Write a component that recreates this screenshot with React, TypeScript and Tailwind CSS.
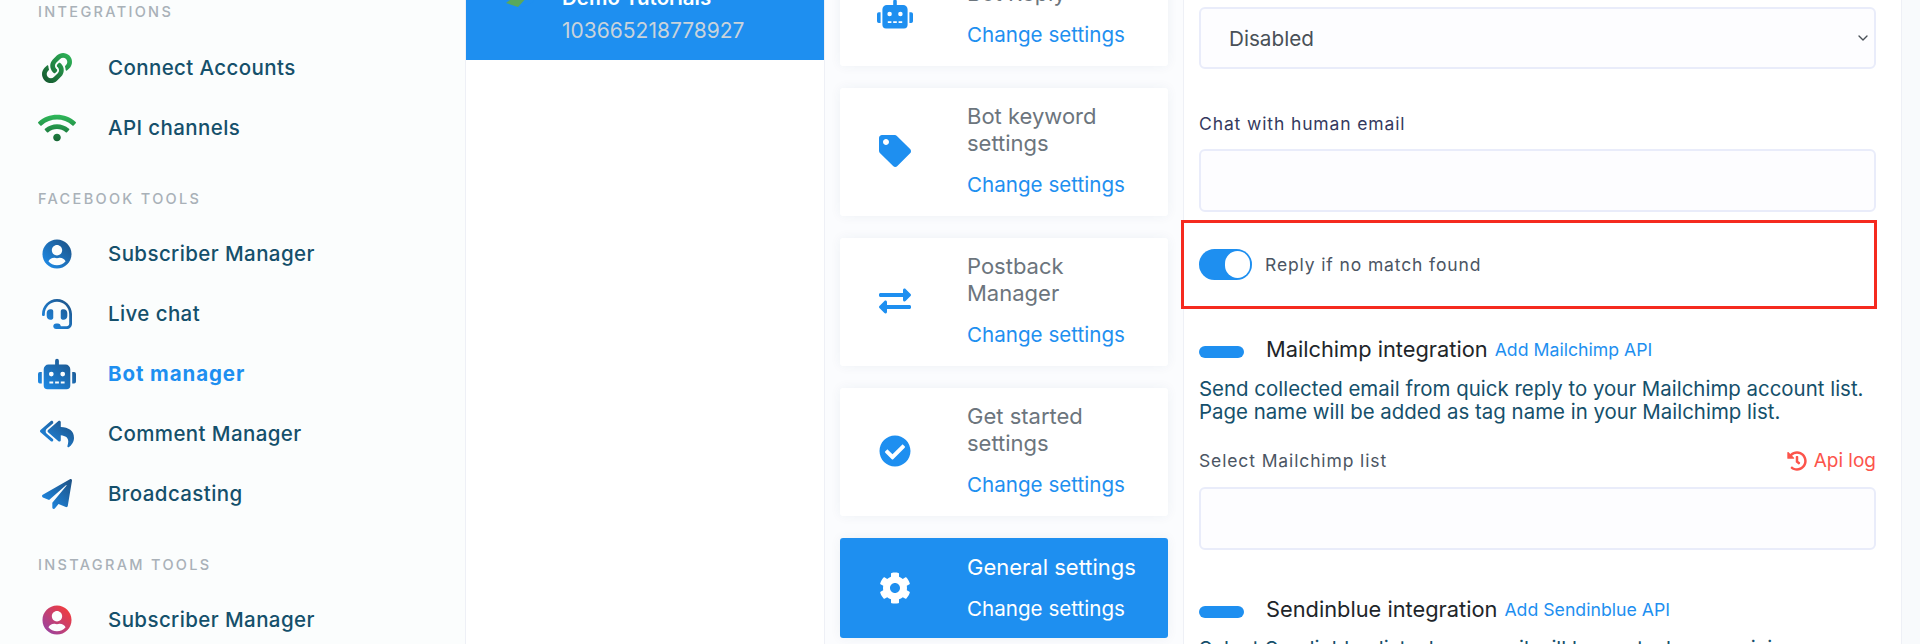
import type { ReactNode } from "react";
import { ChevronDown } from "lucide-react";
import {
  FaCheckCircle,
  FaCog,
  FaExchangeAlt,
  FaHeadset,
  FaHistory,
  FaLink,
  FaPaperPlane,
  FaReplyAll,
  FaRobot,
  FaTag,
  FaUserCircle,
  FaWifi,
} from "react-icons/fa";

function Gradients() {
  return (
    <svg className="block h-0 w-0">
      <defs>
        <linearGradient id="blue-grad" x1="0" y1="1" x2="1" y2="0">
          <stop offset="0%" stopColor="#1e90f0" />
          <stop offset="100%" stopColor="#1d4f80" />
        </linearGradient>
        <linearGradient id="green-grad" x1="0" y1="1" x2="1" y2="0">
          <stop offset="0%" stopColor="#14532d" />
          <stop offset="100%" stopColor="#2fb95a" />
        </linearGradient>
        <linearGradient id="wifi-grad" x1="0" y1="0" x2="0" y2="1">
          <stop offset="0%" stopColor="#2fb95a" />
          <stop offset="100%" stopColor="#166534" />
        </linearGradient>
        <linearGradient id="insta-grad" x1="0" y1="1" x2="1" y2="0">
          <stop offset="0%" stopColor="#8e44ad" />
          <stop offset="100%" stopColor="#ff3b2f" />
        </linearGradient>
      </defs>
    </svg>
  );
}

function SectionLabel({ children, className }: { children: ReactNode; className: string }) {
  return (
    <div className={`h-5 text-[14.5px] leading-5 font-medium tracking-[0.16em] text-[#a9b1b8] ${className}`}>
      {children}
    </div>
  );
}

function NavRow({ icon, label, active }: { icon: ReactNode; label: string; active?: boolean }) {
  return (
    <div className="flex h-[60px] items-center">
      <div className="flex w-[70px] shrink-0 justify-start">
        <div className="flex w-[38px] justify-center">{icon}</div>
      </div>
      <span
        className={`mt-[1px] text-[20.5px] ${active ? "font-bold tracking-[0.9px] text-[#1e8ff0]" : "font-medium tracking-[0.4px] text-[#15506b]"}`}
      >
        {label}
      </span>
    </div>
  );
}

function Sidebar() {
  return (
    <aside className="w-[466px] shrink-0 border-r border-[#eef0f6] bg-[#fbfdfd] pt-[2px] pl-[38px]">
      <Gradients />
      <SectionLabel className="mb-4">INTEGRATIONS</SectionLabel>
      <NavRow icon={<FaLink size={30} fill="url(#green-grad)" />} label="Connect Accounts" />
      <NavRow icon={<FaWifi size={38} fill="url(#wifi-grad)" />} label="API channels" />
      <SectionLabel className="mt-[31px] mb-[15px]">FACEBOOK TOOLS</SectionLabel>
      <NavRow icon={<FaUserCircle size={30} fill="url(#blue-grad)" />} label="Subscriber Manager" />
      <NavRow icon={<FaHeadset size={30} fill="url(#blue-grad)" />} label="Live chat" />
      <NavRow icon={<FaRobot size={38} fill="url(#blue-grad)" />} label="Bot manager" active />
      <NavRow icon={<FaReplyAll size={34} fill="url(#blue-grad)" />} label="Comment Manager" />
      <NavRow icon={<FaPaperPlane size={30} fill="url(#blue-grad)" />} label="Broadcasting" />
      <SectionLabel className="mt-[31px] mb-[15px]">INSTAGRAM TOOLS</SectionLabel>
      <NavRow icon={<FaUserCircle size={30} fill="url(#insta-grad)" />} label="Subscriber Manager" />
    </aside>
  );
}

function PageList() {
  return (
    <div className="w-[359px] shrink-0 border-r border-[#eef0f6] bg-white">
      <div className="relative h-[60px] overflow-hidden bg-[#1e8ff0] pl-[96px]">
        <svg className="absolute top-[-34px] left-[32px]" width="42" height="42" viewBox="0 0 42 42">
          <circle cx="21" cy="21" r="20" fill="#1e8ff0" />
          <path d="M8 37 L26 24 L31 29 L20 41 Z" fill="#5aa85a" />
        </svg>
        <div className="-mt-[17px] text-[20.5px] leading-[30px] font-semibold text-white">Demo Tutorials</div>
        <div className="mt-[3px] text-[21px] leading-[30px] text-[#c9d3db]">103665218778927</div>
      </div>
    </div>
  );
}

function SettingCard({
  icon,
  title,
  active,
  className,
}: {
  icon: ReactNode;
  title: string;
  active?: boolean;
  className: string;
}) {
  return (
    <div
      className={`flex w-[328px] shrink-0 items-center rounded-[3px] pl-[37px] shadow-[0_0_12px_rgba(40,60,100,0.06)] ${
        active ? "bg-[#1e8ff0] text-white" : "bg-white"
      } ${className}`}
    >
      <div className="flex w-[90px] shrink-0">
        <div className="flex w-[36px] justify-center">{icon}</div>
      </div>
      <div className="w-[190px]">
        <div className={`text-[22px] leading-[27px] ${active ? "text-white" : "text-[#6c757d]"}`}>{title}</div>
        <div className={`mt-[14px] text-[20.6px] leading-[27px] ${active ? "text-white" : "text-[#1e8ff0]"}`}>
          Change settings
        </div>
      </div>
    </div>
  );
}

function SettingsColumn() {
  return (
    <div className="flex w-[358px] shrink-0 flex-col gap-[22px] bg-[#fbfcfe] pl-[15px]">
      <SettingCard
        className="-mt-[33px] h-[99px] pb-[6px]"
        icon={<FaRobot size={40} className="text-[#1e8ff0]" />}
        title="Bot Reply"
      />
      <SettingCard
        className="h-[128px] pb-[3px]"
        icon={<FaTag size={32} className="text-[#1e8ff0]" />}
        title="Bot keyword settings"
      />
      <SettingCard
        className="h-[128px] pb-[3px]"
        icon={<FaExchangeAlt size={32} className="text-[#1e8ff0]" />}
        title="Postback Manager"
      />
      <SettingCard
        className="h-[128px] pb-[3px]"
        icon={<FaCheckCircle size={32} className="text-[#1e8ff0]" />}
        title="Get started settings"
      />
      <SettingCard
        active
        className="h-[100px]"
        icon={<FaCog size={32} className="text-white" />}
        title="General settings"
      />
    </div>
  );
}

function FieldBox({ className }: { className: string }) {
  return <input className={`block h-[63px] w-[677px] rounded-[6px] border-2 border-[#e9ecfa] bg-[#fdfdff] ${className}`} />;
}

function IntegrationHeading({ title, link, className }: { title: string; link: string; className: string }) {
  return (
    <div className={`flex items-center ${className}`}>
      <div className="mt-[5px] h-3 w-[45px] shrink-0 rounded-full bg-[#1e8ff0]" />
      <span className="ml-[22px] text-[21.8px] leading-6 text-[#212529]">{title}</span>
      <span className="mt-[2px] ml-[7px] text-[17.7px] leading-6 text-[#1e8ff0]">{link}</span>
    </div>
  );
}

function SettingsPanel() {
  return (
    <div className="w-[719px] shrink-0 border-x border-[#eef0f6] bg-white pl-[15px]">
      <div className="relative mt-[7px] w-[677px]">
        <select className="block h-[62px] w-full appearance-none rounded-[6px] border-2 border-[#e9ecfa] bg-[#fdfdff] pt-[2px] pl-7 text-[20.7px] text-[#495057]">
          <option>Disabled</option>
        </select>
        <ChevronDown className="absolute top-[23px] right-[5px] text-[#495057]" size={16} />
      </div>
      <div className="mt-[43px] text-[17.5px] leading-6 tracking-[0.05em] text-[#34395e]">Chat with human email</div>
      <FieldBox className="mt-[13px]" />
      <div className="-mx-[18px] mt-[8px] box-border flex h-[89px] w-[696px] items-center border-[3px] border-[#f52a1f] pl-[15px]">
        <div className="flex h-[31px] w-[53px] items-center justify-end rounded-full bg-[#1e8ff0] pr-[2px]">
          <div className="h-[27px] w-[25px] rounded-full bg-white" />
        </div>
        <span className="mt-[1px] ml-[13px] text-[17.5px] tracking-[0.05em] text-[#4b5563]">Reply if no match found</span>
      </div>
      <IntegrationHeading className="mt-[27px]" title="Mailchimp integration" link="Add Mailchimp API" />
      <p className="mt-[15px] w-[690px] text-[20.45px] leading-[23px] text-[#15506b]">
        Send collected email from quick reply to your Mailchimp account list.
        <br />
        Page name will be added as tag name in your Mailchimp list.
      </p>
      <div className="mt-[26px] flex w-[677px] items-center justify-between">
        <span className="text-[17.5px] leading-6 tracking-[0.05em] text-[#4b5563]">Select Mailchimp list</span>
        <span className="flex items-center gap-[7px] text-[19px] leading-6 text-[#fc544b]">
          <FaHistory size={20} />
          Api log
        </span>
      </div>
      <FieldBox className="mt-[14px]" />
      <IntegrationHeading className="mt-[46px]" title="Sendinblue integration" link="Add Sendinblue API" />
      <p className="mt-[15px] w-[690px] text-[20.45px] leading-[23px] whitespace-nowrap text-[#15506b]">
        Select Sendinblue list where email will be sent when receiving
      </p>
    </div>
  );
}

export default function App() {
  return (
    <div className="flex h-[644px] w-[1920px] overflow-hidden bg-[#f8fafc] font-['Inter',sans-serif]">
      <Sidebar />
      <PageList />
      <SettingsColumn />
      <SettingsPanel />
    </div>
  );
}
